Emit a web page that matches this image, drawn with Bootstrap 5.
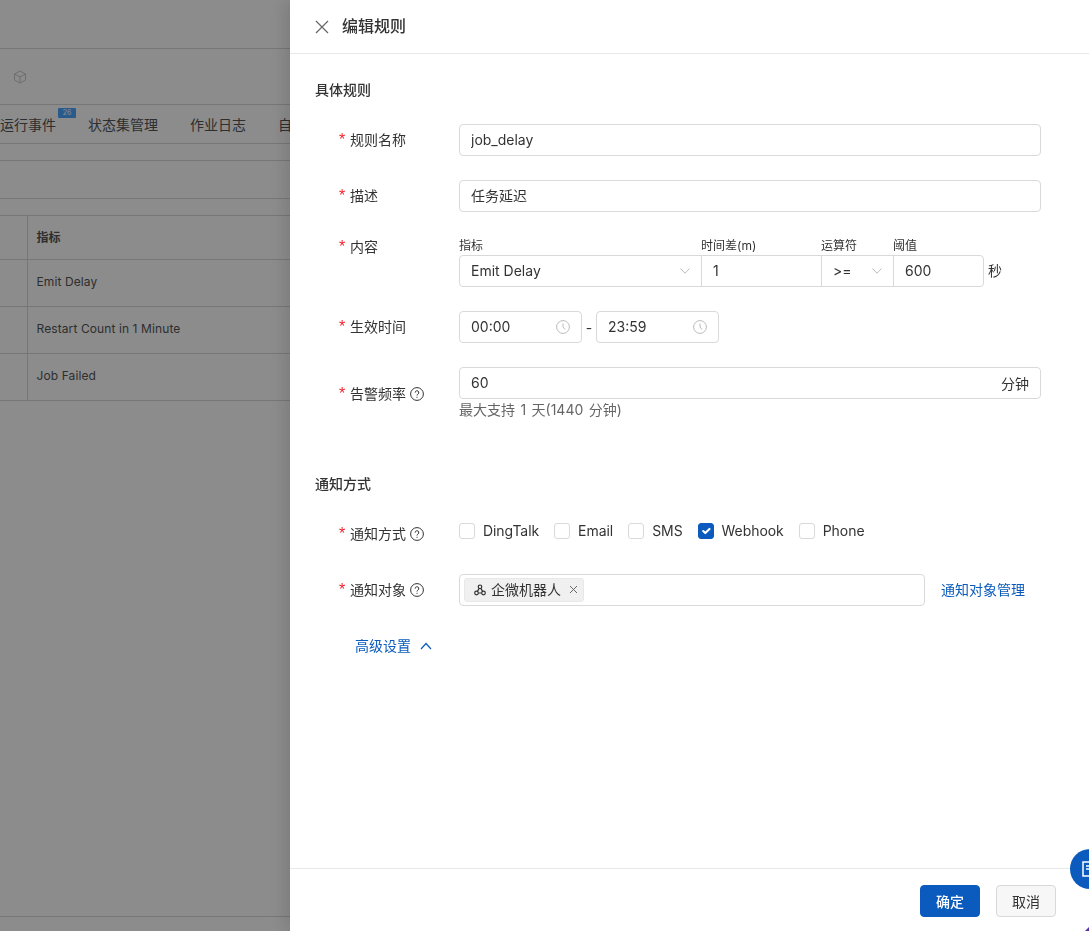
<!DOCTYPE html>
<html lang="zh-CN">
<head>
  <meta charset="UTF-8" />
  <title>编辑规则</title>
  <link href="https://cdn.jsdelivr.net/npm/bootstrap@5.3.0/dist/css/bootstrap.min.css" rel="stylesheet" />
  <style>
    html, body {
      height: 931px;
      overflow: hidden;
    }
    body {
      font-family: Inter, "Noto Sans CJK SC", sans-serif;
      font-size: 14px;
      color: #333;
      background-color: #fff;
    }
    /* page behind the drawer */
    .page-wrap {
      height: 931px;
      width: 290px;
      overflow: hidden;
      color: #555;
    }
    .bar-top { height: 49px; border-bottom: 1px solid #d8d8d8; }
    .bar-tool { height: 56px; border-bottom: 1px solid #d8d8d8; padding-left: 13px; }
    .bar-tabs { height: 39px; border-bottom: 1px solid #d8d8d8; gap: 32px; white-space: nowrap; }
    .tab-item { position: relative; }
    .tab-count {
      position: absolute;
      top: -6px;
      right: -20px;
      width: 18px;
      height: 10px;
      border-radius: 1px;
      background: #4ca5ff;
      color: #fff;
      font-size: 7px;
      line-height: 10px;
      text-align: center;
    }
    .bar-gap { height: 17px; border-bottom: 1px solid #d8d8d8; }
    .bar-filter { height: 38px; border-bottom: 1px solid #d8d8d8; }
    .bg-table { width: 290px; font-size: 12px; letter-spacing: .1px; table-layout: fixed; margin: 0; }
    .bg-table td, .bg-table th {
      height: 47px;
      padding: 0 9px 2px;
      vertical-align: middle;
      border-bottom: 1px solid #d8d8d8;
      color: #555;
    }
    .bg-table th { height: 43px; font-weight: 600; padding: 2px 9px 0; }
    .bg-table .first-cell { width: 27px; border-right: 1px solid #d8d8d8; }
    .bar-bottom { height: 15px; border-top: 1px solid #d8d8d8; }

    /* drawer */
    .offcanvas-backdrop.show { opacity: .45; }
    .rule-drawer {
      --bs-offcanvas-width: 799px;
      border-left: 0 !important;
      color: #333;
      box-shadow: -6px 0 16px rgba(0,0,0,.12);
    }
    .drawer-head { height: 54px; padding: 0 25px; border-bottom: 1px solid #e8e8e8; gap: 13px; flex-shrink: 0; }
    .drawer-title { font-size: 16px; font-weight: 500; color: #333; margin: 0; }
    .drawer-close { border: 0; background: none; padding: 0; line-height: 0; color: #666; }
    .drawer-body { padding: 26px 25px 0; flex-grow: 1; overflow: hidden; }
    .section-head { font-size: 14px; font-weight: 500; line-height: 20px; margin-bottom: 24px; }
    .section-notify { margin-top: 53px; margin-bottom: 29px; }
    .form-line { display: flex; margin-bottom: 24px; }
    .line-label {
      width: 144px;
      padding-left: 24px;
      flex-shrink: 0;
      display: flex;
      align-items: center;
      gap: 4px;
      line-height: 22px;
      white-space: nowrap;
    }
    .line-label.at-top { align-items: flex-start; }
    .req { color: #f5222d; width: 7px; font-size: 16px; font-family: "Liberation Sans", sans-serif; }
    .line-field { width: 582px; }
    .form-control.rule-input, .form-select.rule-input {
      height: 32px;
      min-height: 32px;
      padding: 0 11px 2px;
      font-size: 14px;
      color: #333;
      border: 1px solid #d9d9d9;
      border-radius: 4px;
      box-shadow: none;
    }
    .form-select.rule-input {
      background-image: url("data:image/svg+xml,%3Csvg xmlns='http://www.w3.org/2000/svg' viewBox='0 0 10 6'%3E%3Cpath d='M.5.5 5 5.2 9.5.5' fill='none' stroke='%23bbb'/%3E%3C/svg%3E");
      background-size: 10px 6px;
      background-position: right 11px center;
    }
    .combo-cell { display: flex; flex-direction: column; margin-right: -1px; flex-shrink: 0; }
    .combo-cell .form-control, .combo-cell .form-select { border-radius: 0; }
    .combo-cell:first-child .form-select { border-radius: 4px 0 0 4px; }
    .combo-cell.last-cell .form-control { border-radius: 0 4px 4px 0; }
    .combo-label { font-size: 12px; line-height: 19px; color: #333; white-space: nowrap; }
    .cell-metric { width: 243px; }
    .cell-diff { width: 121px; }
    .cell-op { width: 73px; }
    .cell-limit { width: 91px; margin-right: 0; }
    .combo-unit { padding: 19px 0 0 4px; line-height: 32px; }
    .box-field {
      height: 32px;
      border: 1px solid #d9d9d9;
      border-radius: 4px;
      padding: 0 11px;
      background: #fff;
      display: flex;
      align-items: center;
    }
    .box-field .form-control {
      border: 0;
      padding: 0 0 2px;
      font-size: 14px;
      color: #333;
      box-shadow: none;
      background: transparent;
    }
    .time-box { width: 123px; }
    .time-dash { width: 14px; text-align: center; }
    .help-text { line-height: 22px; color: #666; word-spacing: 1.5px; }
    .check-row { display: flex; height: 27px; }
    .check-item { display: flex; gap: 8px; height: 16px; align-items: center; margin-right: 15px; }
    .check-item span { padding-bottom: 2px; letter-spacing: -.06px; }
    .check-item .form-check-input {
      width: 16px;
      height: 16px;
      margin: 0;
      border: 1px solid #d9d9d9;
      border-radius: 3px;
      box-shadow: none;
      flex-shrink: 0;
    }
    .check-item .form-check-input:checked { background-color: #0a5bbd; border-color: #0a5bbd; }
    .target-box { width: 466px; padding: 0 4px; }
    .target-chip {
      height: 24px;
      width: 120px;
      background: #f0f0f0;
      border: 1px solid #e8e8e8;
      border-radius: 3px;
      padding: 0 5px 1px 9px;
      display: flex;
      align-items: center;
      gap: 5px;
      white-space: nowrap;
    }
    .chip-x { margin-left: auto; line-height: 0; color: #666; }
    .manage-link, .adv-link { color: #0a5bbd; text-decoration: none; }
    .manage-link { margin-left: 16px; line-height: 32px; }
    .adv-link { display: inline-flex; align-items: center; gap: 9px; margin: 5px 0 0 40px; line-height: 22px; }
    .drawer-foot { height: 63px; border-top: 1px solid #e8e8e8; padding: 16px 33px 0 0; gap: 16px; flex-shrink: 0; }
    .btn.foot-btn {
      width: 60px;
      height: 32px;
      padding: 0;
      font-size: 14px;
      border-radius: 4px;
    }
    .btn.foot-ok { background: #0a5bbd; border-color: #0a5bbd; color: #fff; font-weight: 500; }
    .btn.foot-cancel { background: #f7f7f7; border-color: #d9d9d9; color: #333; }
    .help-float {
      position: fixed;
      z-index: 1050;
      left: 1070px;
      top: 849px;
      width: 40px;
      height: 40px;
      border-radius: 50%;
      background: #0a5bbd;
      padding: 12px 0 0 12px;
      line-height: 0;
    }
    .corner-mark {
      position: fixed;
      z-index: 1050;
      right: 0;
      bottom: 0;
      width: 0;
      height: 0;
      border-left: 4px solid transparent;
      border-bottom: 4px solid #5b2ea6;
    }
  </style>
</head>
<body>
  <!-- page behind -->
  <div class="page-wrap d-flex flex-column">
    <div class="bar-top"></div>
    <div class="bar-tool d-flex align-items-center">
      <svg width="14" height="14" viewBox="0 0 14 14" fill="none" stroke="#c8c8c8" stroke-width="1"><path d="M7 1 12.500 4v6L7 13 1.500 10V4zM1.500 4 7 7l5.500-3M7 7v6"/></svg>
    </div>
    <div class="bar-tabs d-flex align-items-center">
      <span class="tab-item">运行事件<span class="tab-count">26</span></span>
      <span>状态集管理</span>
      <span>作业日志</span>
      <span>自</span>
    </div>
    <div class="bar-gap"></div>
    <div class="bar-filter"></div>
    <div class="bar-gap"></div>
    <table class="bg-table">
      <tr><th class="first-cell"></th><th>指标</th></tr>
      <tr><td class="first-cell"></td><td>Emit Delay</td></tr>
      <tr><td class="first-cell"></td><td>Restart Count in 1 Minute</td></tr>
      <tr><td class="first-cell"></td><td>Job Failed</td></tr>
    </table>
    <div class="flex-grow-1"></div>
    <div class="bar-bottom"></div>
  </div>

  <div class="offcanvas-backdrop show"></div>

  <!-- drawer: "showing" keeps it open without bootstrap adding a second backdrop on load -->
  <div class="offcanvas offcanvas-end showing rule-drawer">
    <div class="drawer-head d-flex align-items-center">
      <button class="drawer-close" type="button" aria-label="关闭">
        <svg width="14" height="14" viewBox="0 0 14 14" fill="none" stroke="currentColor" stroke-width="1.200"><path d="M1 1l12 12M13 1 1 13"/></svg>
      </button>
      <h5 class="drawer-title">编辑规则</h5>
    </div>

    <div class="drawer-body">
      <div class="section-head">具体规则</div>

      <div class="form-line">
        <label class="line-label"><span class="req">*</span>规则名称</label>
        <div class="line-field"><input class="form-control rule-input" value="job_delay" /></div>
      </div>

      <div class="form-line">
        <label class="line-label"><span class="req">*</span>描述</label>
        <div class="line-field"><input class="form-control rule-input" value="任务延迟" /></div>
      </div>

      <div class="form-line">
        <label class="line-label at-top"><span class="req">*</span>内容</label>
        <div class="line-field d-flex">
          <div class="combo-cell cell-metric">
            <span class="combo-label">指标</span>
            <select class="form-select rule-input"><option>Emit Delay</option></select>
          </div>
          <div class="combo-cell cell-diff">
            <span class="combo-label">时间差(m)</span>
            <input class="form-control rule-input" value="1" />
          </div>
          <div class="combo-cell cell-op">
            <span class="combo-label">运算符</span>
            <select class="form-select rule-input"><option>&gt;=</option></select>
          </div>
          <div class="combo-cell cell-limit last-cell">
            <span class="combo-label">阈值</span>
            <input class="form-control rule-input" value="600" />
          </div>
          <span class="combo-unit">秒</span>
        </div>
      </div>

      <div class="form-line">
        <label class="line-label"><span class="req">*</span>生效时间</label>
        <div class="line-field d-flex align-items-center">
          <div class="box-field time-box">
            <input class="form-control" value="00:00" />
            <svg width="14" height="14" viewBox="0 0 14 14" fill="none" stroke="#bbb" class="flex-shrink-0"><circle cx="7" cy="7" r="6.400"/><path d="M7 3.500V7l2 2.500"/></svg>
          </div>
          <span class="time-dash">-</span>
          <div class="box-field time-box">
            <input class="form-control" value="23:59" />
            <svg width="14" height="14" viewBox="0 0 14 14" fill="none" stroke="#bbb" class="flex-shrink-0"><circle cx="7" cy="7" r="6.400"/><path d="M7 3.500V7l2 2.500"/></svg>
          </div>
        </div>
      </div>

      <div class="form-line mb-0">
        <label class="line-label"><span class="req">*</span>告警频率
          <svg width="14" height="14" viewBox="0 0 14 14" fill="none" stroke="#333"><circle cx="7" cy="7" r="6.400"/><path d="M5.200 5.600a1.800 1.800 0 1 1 2.700 1.500c-.6.400-.9.700-.9 1.400"/><path d="M7 9.800v1"/></svg>
        </label>
        <div class="line-field">
          <div class="box-field">
            <input class="form-control" value="60" />
            <span class="flex-shrink-0">分钟</span>
          </div>
          <div class="help-text">最大支持 1 天(1440 分钟)</div>
        </div>
      </div>

      <div class="section-head section-notify">通知方式</div>

      <div class="form-line">
        <label class="line-label at-top"><span class="req">*</span>通知方式
          <svg class="mt-1" width="14" height="14" viewBox="0 0 14 14" fill="none" stroke="#333"><circle cx="7" cy="7" r="6.400"/><path d="M5.200 5.600a1.800 1.800 0 1 1 2.700 1.500c-.6.400-.9.700-.9 1.400"/><path d="M7 9.800v1"/></svg>
        </label>
        <div class="line-field check-row">
          <div class="check-item"><input class="form-check-input" type="checkbox" /><span>DingTalk</span></div>
          <div class="check-item"><input class="form-check-input" type="checkbox" /><span>Email</span></div>
          <div class="check-item"><input class="form-check-input" type="checkbox" /><span>SMS</span></div>
          <div class="check-item"><input class="form-check-input" type="checkbox" checked /><span>Webhook</span></div>
          <div class="check-item"><input class="form-check-input" type="checkbox" /><span>Phone</span></div>
        </div>
      </div>

      <div class="form-line">
        <label class="line-label"><span class="req">*</span>通知对象
          <svg width="14" height="14" viewBox="0 0 14 14" fill="none" stroke="#333"><circle cx="7" cy="7" r="6.400"/><path d="M5.200 5.600a1.800 1.800 0 1 1 2.700 1.500c-.6.400-.9.700-.9 1.400"/><path d="M7 9.800v1"/></svg>
        </label>
        <div class="line-field d-flex">
          <div class="box-field target-box">
            <span class="target-chip">
              <svg width="12" height="12" viewBox="0 0 12 12" fill="none" stroke="#333" stroke-width="1.200"><circle cx="6" cy="2.800" r="1.800"/><circle cx="2.500" cy="9" r="1.800"/><circle cx="9.500" cy="9" r="1.800"/><path d="M5.100 4.400 3.400 7.400M4.300 9h3.400M6.900 4.400l1.700 3"/></svg>
              企微机器人
              <span class="chip-x"><svg width="9" height="9" viewBox="0 0 9 9" fill="none" stroke="currentColor"><path d="M1 1l7 7M8 1 1 8"/></svg></span>
            </span>
          </div>
          <a class="manage-link" href="#">通知对象管理</a>
        </div>
      </div>

      <a class="adv-link" href="#">高级设置
        <svg width="12" height="8" viewBox="0 0 12 8" fill="none" stroke="currentColor" stroke-width="1.200"><path d="M1 7 6 1.500 11 7"/></svg>
      </a>
    </div>

    <div class="drawer-foot d-flex justify-content-end">
      <button class="btn foot-btn foot-ok" type="button">确定</button>
      <button class="btn foot-btn foot-cancel" type="button">取消</button>
    </div>
  </div>

  <div class="help-float">
    <svg width="16" height="16" viewBox="0 0 16 16" fill="none" stroke="#fff" stroke-width="1.500"><path d="M1 1h14v14H1zM4 5h8M4 8h8"/></svg>
  </div>
  <div class="corner-mark"></div>

  <script src="https://cdn.jsdelivr.net/npm/bootstrap@5.3.0/dist/js/bootstrap.bundle.min.js"></script>
</body>
</html>
